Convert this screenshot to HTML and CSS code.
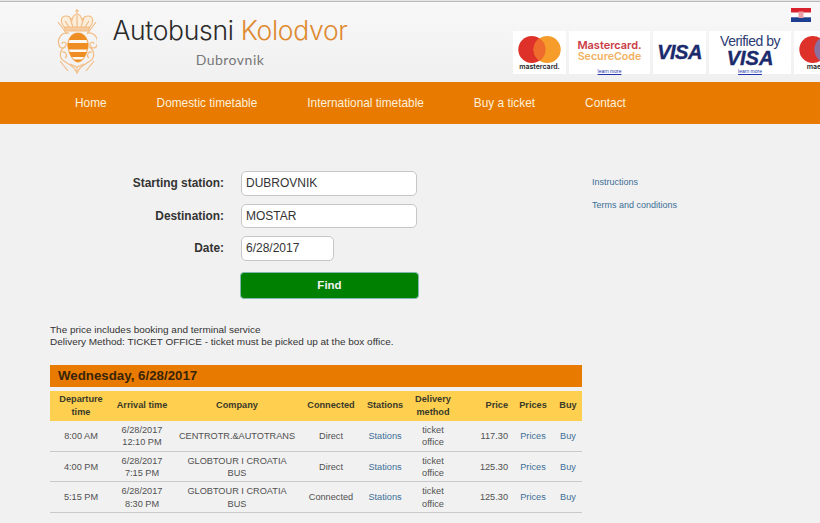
FILE: index.html
```html
<!DOCTYPE html>
<html lang="en">
<head>
    <meta charset="UTF-8">
    <meta name="viewport" content="width=device-width, initial-scale=1.0">
    <title>Autobusni Kolodvor Dubrovnik</title>
    <link rel="stylesheet" href="styles.css">
</head>
<body>
    <header class="header">
        <svg class="crest" viewBox="0 0 40 65" fill="none" stroke="#f2bd85" stroke-width="1.200">
            <defs>
                <clipPath id="shield">
                    <path d="M21 24C28 24 32 32 31 38 30 46 25 53 21 53 17 53 12 46 11 38 10 32 14 24 21 24z"/>
                </clipPath>
            </defs>
            <!-- swords -->
            <path d="M1 13l9 12M39 13l-9 12M3 52l8 10M37 52l-8 10"/>
            <!-- crown -->
            <path d="M20 0v5M18 2h4"/>
            <path d="M8 19C3 14 3 7 9 7c4 0 5 2 6 4 1-4 3-6 5-6s4 2 5 6c1-2 2-4 6-4 6 0 6 7 1 12z" fill="#fbeedd"/>
            <path d="M8 18h24v4H8z" fill="#f6cc9f"/>
            <path d="M20 6v12M13 9l3 9M27 9l-3 9M8 12l4 6M32 12l-4 6"/>
            <!-- scrolls -->
            <path d="M12 24C4 23 0 30 2 36c1 4 6 4 7 0 1-3-4-4-4-1M30 24c8-1 12 6 10 12-1 4-6 4-7 0-1-3 4-4 4-1"/>
            <path d="M8 38C2 41 2 49 7 52c3 2 7 4 10 7l3 5 3-5c3-3 7-5 10-7 5-3 5-11-1-14"/>
            <path d="M5 43c4-1 6 4 3 6M35 43c-4-1-6 4-3 6M13 55l7 3 7-3M20 58v5"/>
            <!-- shield -->
            <path d="M21 24C28 24 32 32 31 38 30 46 25 53 21 53 17 53 12 46 11 38 10 32 14 24 21 24z" fill="#fff8f0" stroke="#f2b26e"/>
            <g clip-path="url(#shield)" fill="#ee8e22" stroke="none">
                <rect x="9" y="23" width="24" height="8"/>
                <rect x="9" y="34" width="24" height="6.500"/>
                <rect x="9" y="43" width="24" height="5"/>
                <rect x="9" y="50.500" width="24" height="3"/>
            </g>
        </svg>
        <div class="brand">
            <h1 class="brand-title">Autobusni <span class="brand-accent">Kolodvor</span></h1>
            <div class="brand-city">Dubrovnik</div>
        </div>
        <div class="header-right">
            <svg class="flag" viewBox="0 0 20 14">
                <rect width="20" height="4.700" fill="#d8232f"/>
                <rect y="4.700" width="20" height="4.600" fill="#fff"/>
                <rect y="9.300" width="20" height="4.700" fill="#1d3f8f"/>
                <rect x="7.500" y="3.500" width="5" height="6.500" fill="#e9a0a4"/>
            </svg>
            <div class="cards">
                <div class="card card-mc">
                    <svg class="mc-mark" viewBox="0 0 44 28">
                        <circle cx="14" cy="14" r="14" fill="#dd3129"/>
                        <circle cx="30" cy="14" r="14" fill="#f59c2a"/>
                        <path d="M22 2.300a14 14 0 0 1 0 23.400 14 14 0 0 1 0-23.400z" fill="#ee6a2d"/>
                    </svg>
                    <span class="mc-name">mastercard.</span>
                </div>
                <div class="card card-sc">
                    <span class="sc-top">Mastercard.</span>
                    <span class="sc-bottom">SecureCode</span>
                    <a class="learn" href="#">learn more</a>
                </div>
                <div class="card card-visa"><span class="visa-word">VISA</span></div>
                <div class="card card-vbv">
                    <span class="vbv-top">Verified by</span>
                    <span class="vbv-word">VISA</span>
                    <a class="learn" href="#">learn more</a>
                </div>
                <div class="card card-mc">
                    <svg class="mc-mark" viewBox="0 0 44 28">
                        <circle cx="14" cy="14" r="14" fill="#dd3129"/>
                        <circle cx="30" cy="14" r="14" fill="#7a8fc0"/>
                        <path d="M22 2.300a14 14 0 0 1 0 23.400 14 14 0 0 1 0-23.400z" fill="#8a6f9f"/>
                    </svg>
                    <span class="mc-name">maestro</span>
                </div>
            </div>
        </div>
    </header>

    <nav class="nav">
        <a href="#">Home</a>
        <a href="#">Domestic timetable</a>
        <a href="#">International timetable</a>
        <a href="#">Buy a ticket</a>
        <a href="#">Contact</a>
    </nav>

    <main class="main">
        <div class="content">
            <form class="search">
                <label for="from">Starting station:</label>
                <input type="text" id="from" value="DUBROVNIK">
                <label for="to">Destination:</label>
                <input type="text" id="to" value="MOSTAR">
                <label for="date">Date:</label>
                <input type="text" id="date" class="date" value="6/28/2017">
                <button type="button" class="find">Find</button>
            </form>

            <p class="notes">
                The price includes booking and terminal service<br>
                Delivery Method: TICKET OFFICE - ticket must be picked up at the box office.
            </p>

            <h2 class="day">Wednesday, 6/28/2017</h2>
            <table class="times">
                <thead>
                    <tr>
                        <th class="c-dep">Departure time</th>
                        <th class="c-arr">Arrival time</th>
                        <th class="c-com">Company</th>
                        <th class="c-con">Connected</th>
                        <th class="c-sta">Stations</th>
                        <th class="c-del">Delivery method</th>
                        <th class="c-pri">Price</th>
                        <th class="c-prs">Prices</th>
                        <th class="c-buy">Buy</th>
                    </tr>
                </thead>
                <tbody>
                    <tr>
                        <td>8:00 AM</td>
                        <td>6/28/2017<br>12:10 PM</td>
                        <td>CENTROTR.&amp;AUTOTRANS</td>
                        <td>Direct</td>
                        <td><a href="#">Stations</a></td>
                        <td>ticket<br>office</td>
                        <td class="c-pri">117.30</td>
                        <td><a href="#">Prices</a></td>
                        <td><a href="#">Buy</a></td>
                    </tr>
                    <tr>
                        <td>4:00 PM</td>
                        <td>6/28/2017<br>7:15 PM</td>
                        <td>GLOBTOUR I CROATIA<br>BUS</td>
                        <td>Direct</td>
                        <td><a href="#">Stations</a></td>
                        <td>ticket<br>office</td>
                        <td class="c-pri">125.30</td>
                        <td><a href="#">Prices</a></td>
                        <td><a href="#">Buy</a></td>
                    </tr>
                    <tr>
                        <td>5:15 PM</td>
                        <td>6/28/2017<br>8:30 PM</td>
                        <td>GLOBTOUR I CROATIA<br>BUS</td>
                        <td>Connected</td>
                        <td><a href="#">Stations</a></td>
                        <td>ticket<br>office</td>
                        <td class="c-pri">125.30</td>
                        <td><a href="#">Prices</a></td>
                        <td><a href="#">Buy</a></td>
                    </tr>
                </tbody>
            </table>
        </div>
        <aside class="side">
            <a href="#">Instructions</a>
            <a href="#">Terms and conditions</a>
        </aside>
    </main>
</body>
</html>
```

FILE: styles.css
```css
/* General Reset */
* {
    margin: 0;
    padding: 0;
    box-sizing: border-box;
}

html, body {
    height: 100%;
    overflow: hidden;
}

body {
    font-family: 'Liberation Sans', Arial, sans-serif;
    background: #f1f1f1;
    color: #333;
}

/* Header */
.header {
    display: flex;
    height: 82px;
    padding: 2px 0 0 57px;
    background: linear-gradient(#e6e6e6 1px, #b9b9b9 1px, #b9b9b9 2px, #f8f8f8 2px, #f0f0f0 100%);
}

.crest {
    width: 40px;
    height: 65px;
    margin-top: 7px;
    flex-shrink: 0;
}

.brand {
    width: 236px;
    margin-left: 15px;
    margin-top: 11px;
    text-align: center;
    flex-shrink: 0;
}

.brand-title {
    font-family: Inter, sans-serif;
    font-size: 26.500px;
    font-weight: 300;
    letter-spacing: -0.3px;
    line-height: 34px;
    color: #2a2a2a;
    white-space: nowrap;
}

.brand-accent {
    color: #de8a30;
}

.brand-city {
    font-family: Lato, sans-serif;
    font-size: 14px;
    letter-spacing: 0.5px;
    line-height: 18px;
    margin-top: 4px;
    color: #777;
}

.header-right {
    margin-left: 165px;
    flex-shrink: 0;
}

.flag {
    display: block;
    width: 20px;
    height: 14px;
    margin: 6px 0 0 278px;
}

.cards {
    display: flex;
    gap: 3px;
    margin-top: 9px;
}

.card {
    position: relative;
    display: flex;
    flex-direction: column;
    align-items: center;
    height: 43px;
    background: #fff;
    flex-shrink: 0;
    color: #1a2a6c;
}

.card-mc {
    width: 53px;
    padding-top: 5px;
    color: #222;
}

.mc-mark {
    width: 43px;
    height: 27px;
}

.mc-name {
    font-family: Inter, sans-serif;
    font-size: 7px;
    font-weight: 600;
    line-height: 8px;
}

.card-sc {
    width: 81px;
    padding-top: 8px;
    font-family: Inter, sans-serif;
    font-weight: 600;
}

.sc-top {
    font-size: 11px;
    line-height: 12px;
    color: #cb3a44;
}

.sc-bottom {
    font-size: 10.700px;
    line-height: 12px;
    color: #efb163;
}

.learn {
    position: absolute;
    bottom: 0;
    font-family: 'Liberation Sans', Arial, sans-serif;
    font-size: 5px;
    font-weight: normal;
    line-height: 6px;
    color: #2233aa;
}

.card-visa {
    width: 53px;
    justify-content: center;
}

.visa-word {
    font-size: 20px;
    font-weight: bold;
    font-style: italic;
    letter-spacing: -0.5px;
    -webkit-text-stroke: 0.4px #1a2a6c;
}

.card-vbv {
    width: 82px;
    padding-top: 3px;
}

.vbv-top {
    font-size: 14px;
    line-height: 15px;
    letter-spacing: -0.5px;
    color: #2c3b72;
}

.vbv-word {
    font-size: 20px;
    font-weight: bold;
    font-style: italic;
    line-height: 18px;
    -webkit-text-stroke: 0.4px #1a2a6c;
}

/* Nav */
.nav {
    display: flex;
    gap: 50px;
    align-items: center;
    height: 42px;
    padding-left: 75px;
    background: #e87a00;
}

.nav a {
    font-size: 11.850px;
    color: #fdf0dc;
    text-decoration: none;
    white-space: nowrap;
}

/* Main */
.main {
    display: flex;
    padding-top: 47px;
}

.content {
    width: 582px;
    flex-shrink: 0;
}

.side {
    display: flex;
    flex-direction: column;
    gap: 12px;
    margin-left: 10px;
    padding-top: 6px;
}

.side a {
    font-size: 9px;
    line-height: 11px;
    color: #3d6f96;
    text-decoration: none;
}

/* Search form */
.search {
    display: grid;
    grid-template-columns: 224px 176px;
    column-gap: 17px;
    row-gap: 8px;
    align-items: center;
}

.search label {
    font-size: 11.900px;
    font-weight: bold;
    text-align: right;
    color: #333;
}

.search input {
    height: 24.500px;
    padding: 0 4px;
    font-family: inherit;
    font-size: 12px;
    color: #333;
    background: #fff;
    border: 1px solid #c6c6c6;
    border-radius: 5px;
    outline: none;
}

.search .date {
    width: 93px;
}

.find {
    grid-column: 2;
    width: 179px;
    height: 27px;
    margin: 3px 0 0 -1px;
    font-family: inherit;
    font-size: 11.500px;
    font-weight: bold;
    color: #f4f4f4;
    background: #008000;
    border: 1px solid #7fb8b0;
    border-radius: 4px;
}

.notes {
    margin: 25px 0 17px 50px;
    font-size: 9.970px;
    line-height: 12px;
    color: #333;
}

.day {
    height: 22px;
    margin-left: 50px;
    padding-left: 8px;
    font-size: 13.300px;
    line-height: 22px;
    color: #3a2408;
    background: #e87a00;
}

/* Timetable */
.times {
    width: 532px;
    margin: 4px 0 0 50px;
    border-collapse: collapse;
    table-layout: fixed;
    font-size: 9.200px;
}

.times th {
    height: 30px;
    padding: 0 2px;
    line-height: 12.500px;
    color: #3a3a2a;
    background: #ffd04f;
}

.times td {
    height: 30.700px;
    padding: 1px 2px 0;
    line-height: 12.500px;
    text-align: center;
    color: #505050;
    border-bottom: 1px solid #c9c9c9;
}

.times a {
    color: #3d6f96;
    text-decoration: none;
}

.c-dep { width: 62px; }
.c-arr { width: 60px; }
.c-com { width: 130px; }
.c-con { width: 58px; }
.c-sta { width: 50px; }
.c-del { width: 46px; }
.c-buy { width: 28px; }
.c-prs { width: 42px; }
.c-pri { width: 56px; }

.times .c-pri {
    padding-right: 4px;
    text-align: right;
}
```
